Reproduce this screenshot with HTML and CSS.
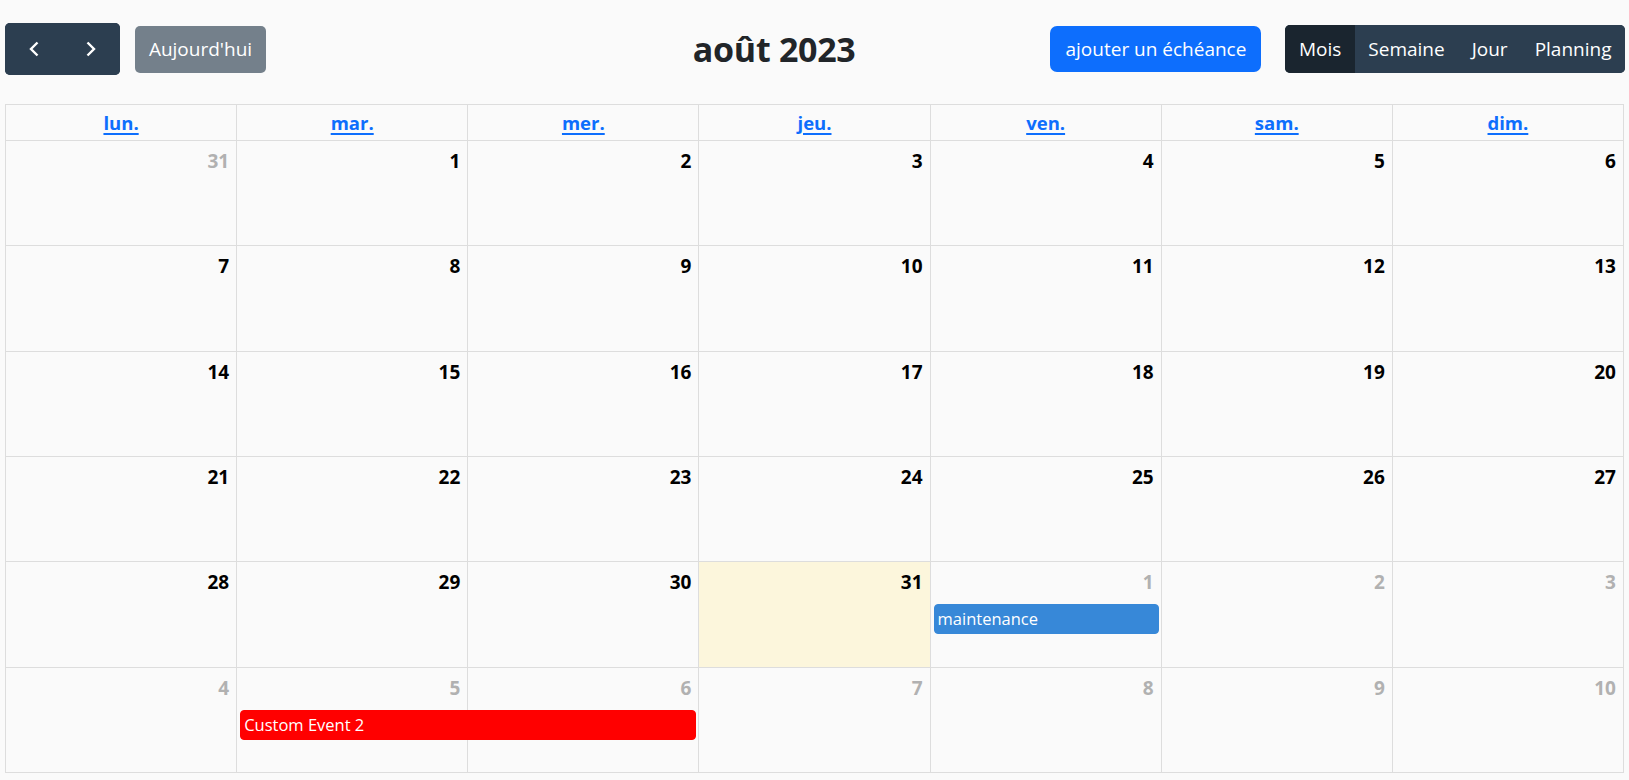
FILE: index.html
```html
<!DOCTYPE html>
<html lang="fr">
<head>
<meta charset="utf-8">
<title>Calendrier</title>
<link rel="stylesheet" href="styles.css">
</head>
<body>
<div class="app">
  <div class="toolbar">
    <div class="chunk">
      <div class="btn-group nav">
        <button class="btn btn-icon" aria-label="précédent">
          <svg width="12" height="16" viewBox="0 0 12 16"><path d="M9.5 1.5 L3 8 L9.5 14.5" fill="none" stroke="#fff" stroke-width="2.4"/></svg>
        </button>
        <button class="btn btn-icon" aria-label="suivant">
          <svg width="12" height="16" viewBox="0 0 12 16"><path d="M2.5 1.5 L9 8 L2.5 14.5" fill="none" stroke="#fff" stroke-width="2.4"/></svg>
        </button>
      </div>
      <button class="btn btn-today">Aujourd'hui</button>
    </div>
    <h2 class="title">août 2023</h2>
    <div class="chunk">
      <button class="btn-add">ajouter un échéance</button>
      <div class="btn-group views">
        <button class="btn btn-view active">Mois</button>
        <button class="btn btn-view">Semaine</button>
        <button class="btn btn-view">Jour</button>
        <button class="btn btn-view">Planning</button>
      </div>
    </div>
  </div>

  <div class="calendar">
    <div class="head">
      <div class="hcell"><a href="#">lun.</a></div>
      <div class="hcell"><a href="#">mar.</a></div>
      <div class="hcell"><a href="#">mer.</a></div>
      <div class="hcell"><a href="#">jeu.</a></div>
      <div class="hcell"><a href="#">ven.</a></div>
      <div class="hcell"><a href="#">sam.</a></div>
      <div class="hcell"><a href="#">dim.</a></div>
    </div>
    <div class="body">
      <div class="week">
        <div class="day other"><span class="num">31</span></div>
        <div class="day"><span class="num">1</span></div>
        <div class="day"><span class="num">2</span></div>
        <div class="day"><span class="num">3</span></div>
        <div class="day"><span class="num">4</span></div>
        <div class="day"><span class="num">5</span></div>
        <div class="day"><span class="num">6</span></div>
      </div>
      <div class="week">
        <div class="day"><span class="num">7</span></div>
        <div class="day"><span class="num">8</span></div>
        <div class="day"><span class="num">9</span></div>
        <div class="day"><span class="num">10</span></div>
        <div class="day"><span class="num">11</span></div>
        <div class="day"><span class="num">12</span></div>
        <div class="day"><span class="num">13</span></div>
      </div>
      <div class="week">
        <div class="day"><span class="num">14</span></div>
        <div class="day"><span class="num">15</span></div>
        <div class="day"><span class="num">16</span></div>
        <div class="day"><span class="num">17</span></div>
        <div class="day"><span class="num">18</span></div>
        <div class="day"><span class="num">19</span></div>
        <div class="day"><span class="num">20</span></div>
      </div>
      <div class="week">
        <div class="day"><span class="num">21</span></div>
        <div class="day"><span class="num">22</span></div>
        <div class="day"><span class="num">23</span></div>
        <div class="day"><span class="num">24</span></div>
        <div class="day"><span class="num">25</span></div>
        <div class="day"><span class="num">26</span></div>
        <div class="day"><span class="num">27</span></div>
      </div>
      <div class="week">
        <div class="day"><span class="num">28</span></div>
        <div class="day"><span class="num">29</span></div>
        <div class="day"><span class="num">30</span></div>
        <div class="day today"><span class="num">31</span></div>
        <div class="day other"><span class="num">1</span></div>
        <div class="day other"><span class="num">2</span></div>
        <div class="day other"><span class="num">3</span></div>
        <div class="event event-blue col-5">maintenance</div>
      </div>
      <div class="week">
        <div class="day other"><span class="num">4</span></div>
        <div class="day other"><span class="num">5</span></div>
        <div class="day other"><span class="num">6</span></div>
        <div class="day other"><span class="num">7</span></div>
        <div class="day other"><span class="num">8</span></div>
        <div class="day other"><span class="num">9</span></div>
        <div class="day other"><span class="num">10</span></div>
        <div class="event event-red col-2-3">Custom Event 2</div>
      </div>
    </div>
  </div>
</div>
</body>
</html>
```

FILE: styles.css
```css
* { box-sizing: border-box; }

html, body {
  margin: 0;
  background: #fafafa;
}

body {
  font-family: "Open Sans", "Noto Sans", sans-serif;
  color: #212529;
}

.app {
  padding: 23px 4px 0 5px;
}

.toolbar {
  display: flex;
  align-items: center;
  height: 52px;
  margin-bottom: 29px;
}

.chunk {
  display: flex;
  align-items: center;
}

.btn {
  font-family: inherit;
  font-size: 19px;
  color: #fff;
  border: 0;
  margin: 0;
  cursor: pointer;
}

.btn-group {
  display: flex;
  border-radius: 5px;
  overflow: hidden;
  background: #2c3e50;
}

.nav {
  height: 52px;
}

.btn-icon {
  width: 57.5px;
  height: 52px;
  background: #2c3e50;
  display: flex;
  align-items: center;
  justify-content: center;
  padding: 0;
}

.btn-today {
  margin-left: 15px;
  height: 47px;
  width: 131px;
  padding: 0;
  background: #74808b;
  border-radius: 5px;
}

.title {
  margin: 0 195px 0 auto;
  font-size: 34px;
  font-weight: 700;
  line-height: 1.2;
  color: #212529;
  letter-spacing: -0.3px;
}

.btn-add {
  font-family: inherit;
  font-size: 19px;
  color: #fff;
  background: #0d6efd;
  border: 0;
  border-radius: 7px;
  height: 46px;
  width: 211px;
  padding: 0;
}

.views {
  margin-left: 24px;
  height: 48px;
}

.btn-view {
  background: #2c3e50;
  height: 48px;
  padding: 0 13.5px;
}

.btn-view.active {
  background: #1a252f;
}

.calendar {
  width: 1619px;
  border-top: 1px solid #ddd;
  border-left: 1px solid #ddd;
}

.head {
  display: grid;
  grid-template-columns: repeat(7, 1fr);
}

.hcell {
  height: 36px;
  border-right: 1px solid #ddd;
  border-bottom: 1px solid #ddd;
  display: flex;
  align-items: center;
  justify-content: center;
}

.hcell a {
  color: #0d6efd;
  font-weight: 700;
  font-size: 18.5px;
  text-decoration: underline;
  text-decoration-thickness: 2px;
  text-underline-offset: 3px;
}

.body {
  display: grid;
  grid-template-rows: repeat(6, 1fr);
  height: 632px;
}

.week {
  display: grid;
  grid-template-columns: repeat(7, 1fr);
  grid-template-rows: 42px 30px 1fr;
}

.day {
  grid-row: 1 / -1;
  border-right: 1px solid #ddd;
  border-bottom: 1px solid #ddd;
  text-align: right;
  padding: 6px 7px 0 0;
}

.week .day:nth-child(1) { grid-column: 1; }
.week .day:nth-child(2) { grid-column: 2; }
.week .day:nth-child(3) { grid-column: 3; }
.week .day:nth-child(4) { grid-column: 4; }
.week .day:nth-child(5) { grid-column: 5; }
.week .day:nth-child(6) { grid-column: 6; }
.week .day:nth-child(7) { grid-column: 7; }

.num {
  font-size: 19px;
  font-weight: 700;
  line-height: 1.5;
  color: #000;
}

.day.other .num {
  color: #b1b1b1;
}

.day.today {
  background: #fcf6dc;
}

.event {
  grid-row: 2;
  margin: 0 3px;
  height: 30px;
  border-radius: 4px;
  color: #fff;
  font-size: 16.5px;
  line-height: 28px;
  padding: 0 3px;
  white-space: nowrap;
  overflow: hidden;
}

.event-blue {
  background: #3788d8;
  border: 1px solid #3788d8;
}

.event-red {
  background: #ff0000;
  border: 1px solid #ff0000;
}

.col-5 { grid-column: 5; }
.col-2-3 { grid-column: 2 / span 2; }
```
